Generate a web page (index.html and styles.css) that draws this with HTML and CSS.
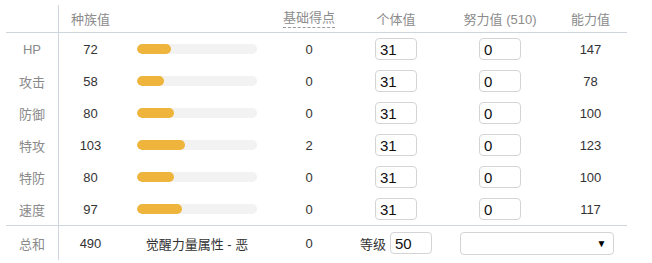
FILE: index.html
```html
<!DOCTYPE html>
<html lang="zh">
<head>
<meta charset="utf-8">
<link rel="stylesheet" href="styles.css">
</head>
<body>
<div class="stats">
  <div class="c lab hd"></div>
  <div class="c hd">种族值</div>
  <div class="c hd"></div>
  <div class="c hd"><span class="dash">基础得点</span></div>
  <div class="c hd">个体值</div>
  <div class="c hd">努力值 (510)</div>
  <div class="c hd">能力值</div>

  <div class="c lab">HP</div>
  <div class="c val">72</div>
  <div class="c"><div class="track"><div class="fill" style="width:34px"></div></div></div>
  <div class="c val">0</div>
  <div class="c"><input class="num" value="31"></div>
  <div class="c"><input class="num" value="0"></div>
  <div class="c val">147</div>

  <div class="c lab">攻击</div>
  <div class="c val">58</div>
  <div class="c"><div class="track"><div class="fill" style="width:27px"></div></div></div>
  <div class="c val">0</div>
  <div class="c"><input class="num" value="31"></div>
  <div class="c"><input class="num" value="0"></div>
  <div class="c val">78</div>

  <div class="c lab">防御</div>
  <div class="c val">80</div>
  <div class="c"><div class="track"><div class="fill" style="width:37px"></div></div></div>
  <div class="c val">0</div>
  <div class="c"><input class="num" value="31"></div>
  <div class="c"><input class="num" value="0"></div>
  <div class="c val">100</div>

  <div class="c lab">特攻</div>
  <div class="c val">103</div>
  <div class="c"><div class="track"><div class="fill" style="width:48px"></div></div></div>
  <div class="c val">2</div>
  <div class="c"><input class="num" value="31"></div>
  <div class="c"><input class="num" value="0"></div>
  <div class="c val">123</div>

  <div class="c lab">特防</div>
  <div class="c val">80</div>
  <div class="c"><div class="track"><div class="fill" style="width:37px"></div></div></div>
  <div class="c val">0</div>
  <div class="c"><input class="num" value="31"></div>
  <div class="c"><input class="num" value="0"></div>
  <div class="c val">100</div>

  <div class="c lab">速度</div>
  <div class="c val">97</div>
  <div class="c"><div class="track"><div class="fill" style="width:45px"></div></div></div>
  <div class="c val">0</div>
  <div class="c"><input class="num" value="31"></div>
  <div class="c"><input class="num" value="0"></div>
  <div class="c val">117</div>

  <div class="c lab tot">总和</div>
  <div class="c val tot">490</div>
  <div class="c val tot">觉醒力量属性 - 恶</div>
  <div class="c val tot">0</div>
  <div class="c val tot"><span class="lvl">等级</span><input class="num" value="50"></div>
  <div class="c tot span2"><div class="sel"><span class="arrow">▼</span></div></div>
</div>
</body>
</html>
```

FILE: styles.css
```css
html, body {
  margin: 0;
  padding: 0;
  background: #fff;
}
body {
  font-family: "Liberation Sans", "Noto Sans CJK SC", sans-serif;
  font-size: 13px;
  color: #333;
}
.stats {
  display: grid;
  grid-template-columns: 53px 63px 150px 74px 100px 108px 73px;
  grid-template-rows: 28px repeat(6, 32px) 35px;
  margin: 5px 0 0 6px;
  width: 621px;
}
.c {
  box-sizing: border-box;
  display: flex;
  align-items: center;
  justify-content: center;
}
.hd {
  color: #8c8c8c;
  border-bottom: 1px solid #cfd5df;
}
.lab {
  color: #8a8a8a;
  border-right: 1px solid #cfd5df;
}
.val {
  color: #333;
}
.tot {
  border-top: 1px solid #cfd5df;
}
.dash {
  border-bottom: 1px dashed #999;
  line-height: 16px;
  padding-bottom: 1px;
}
.track {
  width: 120px;
  height: 10px;
  border-radius: 5px;
  background: #f2f2f2;
  overflow: hidden;
}
.fill {
  height: 10px;
  border-radius: 5px;
  background: #efb43b;
}
.num {
  -webkit-appearance: none;
  appearance: none;
  box-sizing: border-box;
  width: 42px;
  height: 22px;
  border: 1px solid #d4d4d4;
  border-radius: 4px;
  box-shadow: none;
  padding: 0 4px;
  margin: 0;
  font-family: "Liberation Sans", sans-serif;
  font-size: 15px;
  color: #111;
  background: #fff;
  outline: none;
}
.lvl {
  color: #333;
  margin-right: 4px;
}
.span2 {
  grid-column: span 2;
}
.sel {
  position: relative;
  box-sizing: border-box;
  width: 154px;
  height: 23px;
  border: 1px solid #d4d4d4;
  border-radius: 4px;
  background: #fff;
}
.arrow {
  position: absolute;
  right: 6px;
  top: 4px;
  font-size: 10px;
  line-height: 13px;
  color: #000;
}
```
